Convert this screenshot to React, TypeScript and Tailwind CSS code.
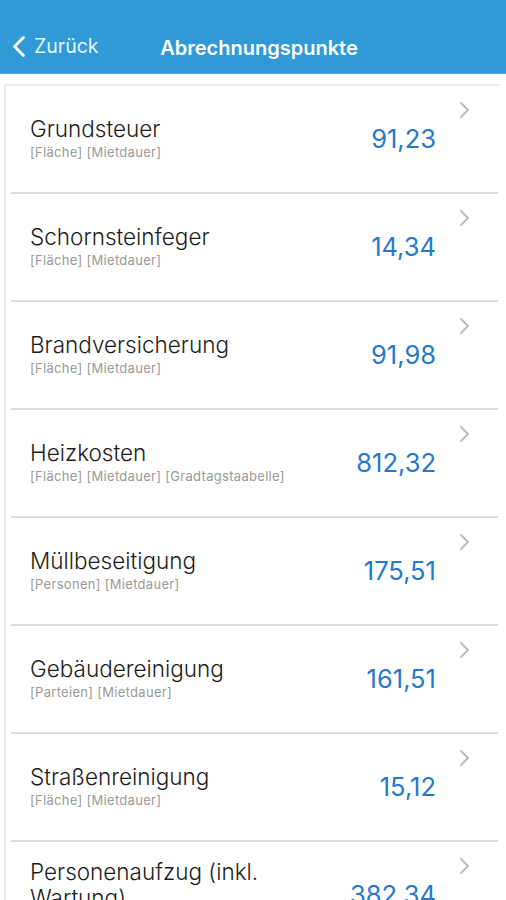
import React from 'react';

const items = [
  { title: 'Grundsteuer', tags: '[Fläche] [Mietdauer]', value: '91,23' },
  { title: 'Schornsteinfeger', tags: '[Fläche] [Mietdauer]', value: '14,34' },
  { title: 'Brandversicherung', tags: '[Fläche] [Mietdauer]', value: '91,98' },
  { title: 'Heizkosten', tags: '[Fläche] [Mietdauer] [Gradtagstaabelle]', value: '812,32' },
  { title: 'Müllbeseitigung', tags: '[Personen] [Mietdauer]', value: '175,51' },
  { title: 'Gebäudereinigung', tags: '[Parteien] [Mietdauer]', value: '161,51' },
  { title: 'Straßenreinigung', tags: '[Fläche] [Mietdauer]', value: '15,12' },
  { title: 'Personenaufzug (inkl. Wartung)', tags: '[Fläche] [Mietdauer]', value: '382,34' },
];

function Chevron({ className, left }: { className?: string; left?: boolean }) {
  return (
    <svg viewBox="0 0 11 18" className={className} fill="none">
      <path
        d={left ? 'M9 2L2 9l7 7' : 'M2 2l7 7-7 7'}
        stroke="currentColor"
        strokeWidth="2.2"
        strokeLinecap="round"
        strokeLinejoin="round"
      />
    </svg>
  );
}

export default function App() {
  return (
    <div className="h-[900px] overflow-hidden bg-white font-['Inter',sans-serif]">
      {/* Nav bar */}
      <div className="h-[74px] bg-[#2f9ad6] border-b border-[#5ab0e2] flex items-end pb-[15px] relative">
        <div className="flex items-center pl-[12px] text-white">
          <Chevron left className="w-[14px] h-[23px]" />
          <span className="ml-[8px] text-[19.5px] leading-none text-[#e8f3fb]">Zurück</span>
        </div>
        <div className="absolute left-0 right-0 bottom-[15px] flex justify-center pl-[12px]">
          <span className="text-[20px] font-semibold leading-none text-white">Abrechnungspunkte</span>
        </div>
      </div>

      {/* List card */}
      <div className="mt-[10px] ml-[4px] mr-[6px] border-l-2 border-t-2 border-[#ececec]">
        <div className="ml-[5px] mr-[2px]">
          {items.map((item) => (
            <div key={item.title} className="h-[108px] border-b-2 border-[#dcdcdc] flex items-start">
              <div className="flex-1 h-full flex items-center pl-[19px]">
                <div className="w-[280px] mt-[-2px]">
                  <div className="text-[22.5px] leading-[26px] font-[350] text-[#1c1c1c]">{item.title}</div>
                  <div className="text-[13px] leading-[16px] mt-[2px] tracking-[0.3px] text-[#9a9a9a]">{item.tags}</div>
                </div>
              </div>
              <div className="h-full flex items-center text-[25.5px] text-[#2479cc]">{item.value}</div>
              <Chevron className="w-[11px] h-[18px] mt-[15px] ml-[23px] mr-[28px] text-[#bdbdbd]" />
            </div>
          ))}
        </div>
      </div>
    </div>
  );
}
